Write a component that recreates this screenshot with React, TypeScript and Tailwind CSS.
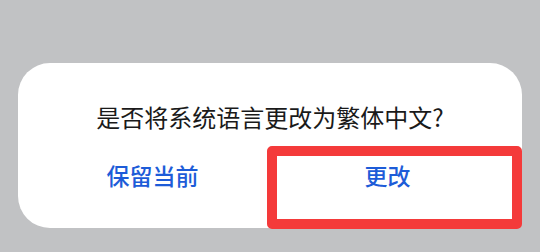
export default function App() {
  return (
    <div
      className="w-[540px] h-[252px] bg-[#c1c2c4] pt-[63px] pl-[18px] overflow-hidden"
      style={{ fontFamily: '"Noto Sans CJK SC", "Noto Sans", sans-serif' }}
    >
      <div className="relative w-[504px] h-[165px] bg-white rounded-[32px] pt-[36px]">
        <p className="text-center text-[24px] leading-[36px] text-[#1a1a1a]">
          是否将系统语言更改为繁体中文?
        </p>

        <div className="grid grid-cols-2 gap-[14px] px-[24px] mt-[12px]">
          <button className="h-[56px] flex items-center justify-center text-[23px] font-medium text-[#1d5cd8]">
            保留当前
          </button>
          <button className="h-[56px] flex items-center justify-center text-[23px] font-medium text-[#1d5cd8]">
            更改
          </button>
        </div>

        {/* annotation box over the confirm button */}
        <div className="absolute left-[249px] top-[83px] w-[255px] h-[83px] border-[10px] border-[#f43a3a] rounded-[5px] pointer-events-none" />
      </div>
    </div>
  );
}
